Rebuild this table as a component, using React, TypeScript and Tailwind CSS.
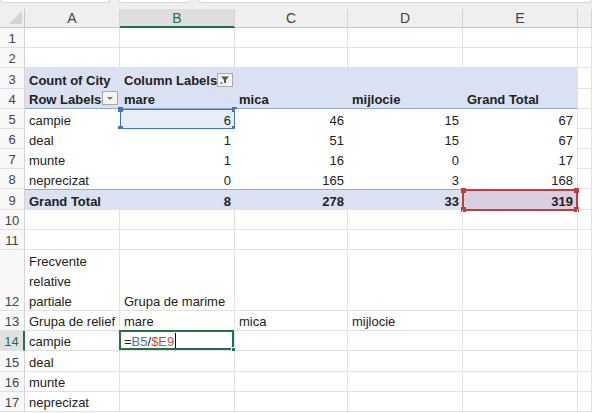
import React from "react";

const COLS = "grid grid-cols-[25px_95px_115px_113px_115px_115px_14px]";
const GRID = "border-[#e1e1e1]";
const PIV = "bg-[#d9e1f2]";

type CellProps = {
  children?: React.ReactNode;
  className?: string;
  right?: boolean;
  bold?: boolean;
};

function Cell({ children, className = "", right, bold }: CellProps) {
  return (
    <div
      className={`relative flex items-end overflow-visible whitespace-nowrap pb-0 leading-[16px] ${
        right ? "justify-end pr-[4px]" : "pl-[4px]"
      } ${bold ? "font-bold" : ""} ${className}`}
    >
      {children}
    </div>
  );
}

function G(props: CellProps) {
  return <Cell {...props} className={`border-r border-b ${GRID} ${props.className ?? ""}`} />;
}

function RowHead({ n, active }: { n: number; active?: boolean }) {
  return (
    <div
      className={`flex items-end justify-center pb-0 leading-[16px] text-[13px] border-b border-[#e1e1e1] ${
        active
          ? "bg-[#e1e1e1] text-[#217346] border-r-2 border-r-[#217346]"
          : "bg-[#f8f8f8] text-[#444] border-r border-r-[#d4d4d4]"
      }`}
    >
      {n}
    </div>
  );
}

function Corners({ color }: { color: string }) {
  const s = "absolute w-[5px] h-[5px]";
  return (
    <>
      <span className={`${s} -left-[3px] -top-[3px]`} style={{ background: color }} />
      <span className={`${s} -right-[3px] -top-[3px]`} style={{ background: color }} />
      <span className={`${s} -left-[3px] -bottom-[3px]`} style={{ background: color }} />
      <span className={`${s} -right-[3px] -bottom-[3px]`} style={{ background: color }} />
    </>
  );
}

function FilterBtn() {
  return (
    <span className="ml-auto mr-[2px] mb-[2px] flex h-[14px] w-[17px] items-center justify-center border border-[#a9a9a9] bg-[#f4f4f4]">
      <svg width="13" height="10" viewBox="0 0 13 10">
        <path d="M2 1.5h8l-3 3.5v3.5l-2 -1v-2.5z" fill="#555" />
        <path d="M1 7.5h3l-1.5 1.8z" fill="#555" />
      </svg>
    </span>
  );
}

function DropBtn() {
  return (
    <span className="ml-auto mr-[2px] mb-[3px] flex h-[14px] w-[16px] items-center justify-center border border-[#a9a9a9] bg-[#f4f4f4]">
      <svg width="8" height="5" viewBox="0 0 8 5">
        <path d="M1 1h6l-3 3z" fill="#777" />
      </svg>
    </span>
  );
}

function PivotBodyRow({
  n,
  label,
  vals,
  b5,
}: {
  n: number;
  label: string;
  vals: (string | number)[];
  b5?: boolean;
}) {
  return (
    <div className={`${COLS} h-[20px]`}>
      <RowHead n={n} />
      <Cell className="bg-white">{label}</Cell>
      <Cell right className={b5 ? "bg-[#e8eef8]" : "bg-white"}>
        {b5 && (
          <span className="pointer-events-none absolute inset-0 border border-[#4472c4]">
            <Corners color="#4472c4" />
          </span>
        )}
        {vals[0]}
      </Cell>
      <Cell right className="bg-white">{vals[1]}</Cell>
      <Cell right className="bg-white">{vals[2]}</Cell>
      <Cell right className={`bg-white border-r ${GRID}`}>{vals[3]}</Cell>
      <G />
    </div>
  );
}

export default function App() {
  return (
    <div className="w-[592px] h-[413px] overflow-hidden bg-white font-['Liberation_Sans',Arial,sans-serif] text-[13px] text-[#222]">
      {/* formula bar remnants */}
      <div className="flex h-[9px] gap-[8px] bg-[#efefef]">
        <div className="h-[3px] w-[110px] rounded-b-[3px] border border-t-0 border-[#d6d6d6] bg-white" />
        <div className="h-[3px] w-[73px] rounded-b-[3px] border border-t-0 border-[#d6d6d6] bg-white" />
        <div className="h-[3px] flex-1 rounded-b-[3px] border border-t-0 border-[#d6d6d6] bg-white" />
      </div>
      {/* column headers */}
      <div className={`${COLS} h-[19px] bg-[#efefef] text-[14px] text-[#444]`}>
        <div className="relative border-r border-b border-[#c8c8c8]">
          <svg className="absolute right-[2px] bottom-[3px]" width="13" height="13" viewBox="0 0 13 13">
            <path d="M13 0V13H0z" fill="#d4d4d4" />
          </svg>
        </div>
        {["A", "B", "C", "D", "E", ""].map((c) => (
          <div
            key={c || "F"}
            className={`flex items-center justify-center leading-[16px] border-r border-r-[#d4d4d4] ${
              c === "B"
                ? "bg-[#dedede] text-[#217346] border-b-2 border-b-[#217346]"
                : "border-b border-b-[#c8c8c8]"
            }`}
          >
            {c}
          </div>
        ))}
      </div>

      {/* rows 1-2 */}
      {[1, 2].map((n) => (
        <div key={n} className={`${COLS} h-[20px]`}>
          <RowHead n={n} />
          <G />
          <G />
          <G />
          <G />
          <G />
          <G />
        </div>
      ))}

      {/* row 3 */}
      <div className={`${COLS} h-[21px]`}>
        <RowHead n={3} />
        <Cell bold className={PIV}>Count of City</Cell>
        <Cell bold className={PIV}>
          <span>Column Labels</span>
          <FilterBtn />
        </Cell>
        <Cell className={PIV} />
        <Cell className={PIV} />
        <Cell className={`${PIV} border-r ${GRID}`} />
        <G />
      </div>

      {/* row 4 */}
      <div className={`${COLS} h-[20px]`}>
        <RowHead n={4} />
        <Cell bold className={`${PIV} border-b border-[#8ea9db]`}>
          <span>Row Labels</span>
          <DropBtn />
        </Cell>
        <Cell bold className={`${PIV} border-b border-[#8ea9db]`}>mare</Cell>
        <Cell bold className={`${PIV} border-b border-[#8ea9db]`}>mica</Cell>
        <Cell bold className={`${PIV} border-b border-[#8ea9db]`}>mijlocie</Cell>
        <Cell bold className={`${PIV} border-b border-b-[#8ea9db] border-r border-r-[#e1e1e1]`}>Grand Total</Cell>
        <G />
      </div>

      <PivotBodyRow n={5} label="campie" vals={[6, 46, 15, 67]} b5 />
      <PivotBodyRow n={6} label="deal" vals={[1, 51, 15, 67]} />
      <PivotBodyRow n={7} label="munte" vals={[1, 16, 0, 17]} />
      <PivotBodyRow n={8} label="neprecizat" vals={[0, 165, 3, 168]} />

      {/* row 9 grand total */}
      <div className={`${COLS} h-[21px]`}>
        <RowHead n={9} />
        <Cell bold className={`${PIV} border-t border-[#8ea9db]`}>Grand Total</Cell>
        <Cell bold right className={`${PIV} border-t border-[#8ea9db]`}>8</Cell>
        <Cell bold right className={`${PIV} border-t border-[#8ea9db]`}>278</Cell>
        <Cell bold right className={`${PIV} border-t border-[#8ea9db]`}>33</Cell>
        <Cell bold right className="bg-[#d9cfe0] border-t border-t-[#8ea9db] border-r border-r-[#e1e1e1]">
          <span className="pointer-events-none absolute -inset-[1px] border-2 border-[#c43b3b]">
            <Corners color="#c43b3b" />
          </span>
          319
        </Cell>
        <G />
      </div>

      {/* rows 10-11 */}
      {[10, 11].map((n) => (
        <div key={n} className={`${COLS} h-[20px]`}>
          <RowHead n={n} />
          <G />
          <G />
          <G />
          <G />
          <G />
          <G />
        </div>
      ))}

      {/* row 12 */}
      <div className={`${COLS} h-[61px]`}>
        <RowHead n={12} />
        <G className="!leading-[20px]">
          <span className="mb-[-2px] whitespace-normal">
            Frecvente
            <br />
            relative
            <br />
            partiale
          </span>
        </G>
        <G>Grupa de marime</G>
        <G />
        <G />
        <G />
        <G />
      </div>

      {/* row 13 */}
      <div className={`${COLS} h-[20px]`}>
        <RowHead n={13} />
        <G className="overflow-hidden">Grupa de relief</G>
        <G>mare</G>
        <G>mica</G>
        <G>mijlocie</G>
        <G />
        <G />
      </div>

      {/* row 14 */}
      <div className={`${COLS} h-[20px]`}>
        <RowHead n={14} active />
        <G>campie</G>
        <G>
          <span className="pointer-events-none absolute -left-[1px] -top-[1px] right-0 bottom-0 border-2 border-[#217346]">
            <span className="absolute -right-[4px] -bottom-[4px] h-[5px] w-[5px] border border-white bg-[#217346]" />
          </span>
          <span>=</span>
          <span className="text-[#4472c4]">B5</span>
          <span>/</span>
          <span className="text-[#c0504d]">$E9</span>
          <span className="mb-[1px] ml-[1px] h-[16px] w-[1px] bg-black" />
        </G>
        <G />
        <G />
        <G />
        <G />
      </div>

      {[
        [15, "deal", 21],
        [16, "munte", 20],
        [17, "neprecizat", 20],
      ].map(([n, t, h]) => (
        <div key={n as number} className={`${COLS} ${h === 21 ? "h-[21px]" : "h-[20px]"}`}>
          <RowHead n={n as number} />
          <G>{t}</G>
          <G />
          <G />
          <G />
          <G />
          <G />
        </div>
      ))}
    </div>
  );
}
